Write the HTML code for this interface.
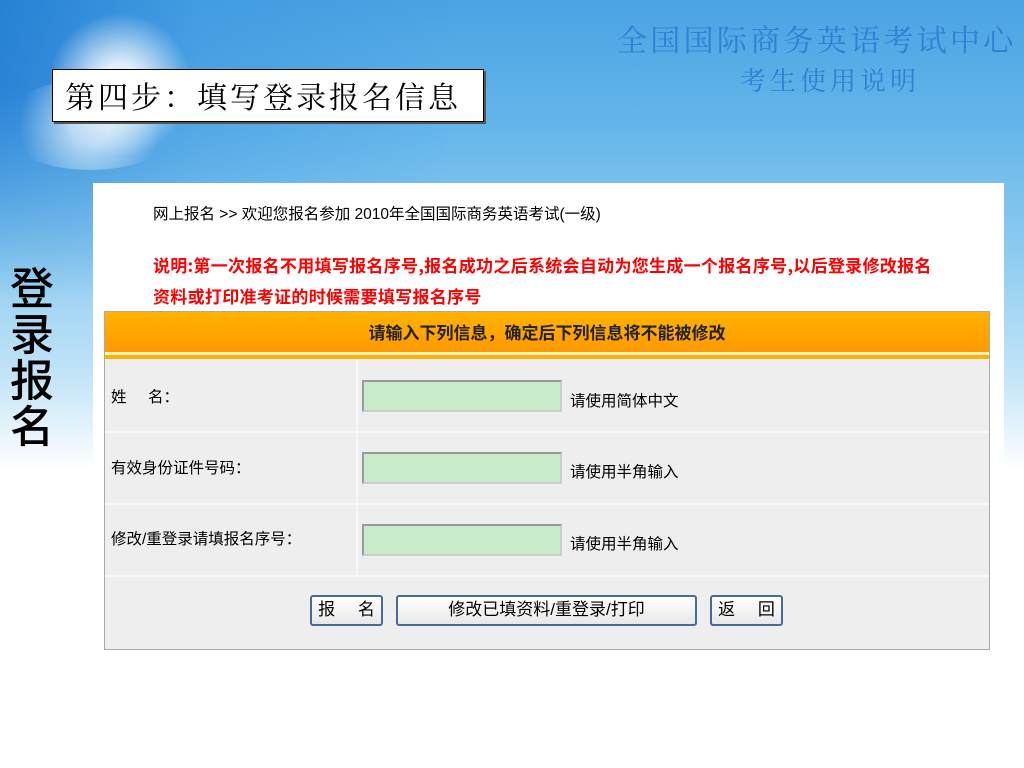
<!DOCTYPE html>
<html><head><meta charset="utf-8"><style>
*{margin:0;padding:0;box-sizing:border-box}
body{width:1024px;height:768px;overflow:hidden;position:relative;font-family:"Liberation Sans","Noto Sans CJK SC",sans-serif;
background:linear-gradient(180deg,#4aa3e2 0px,#62b5ea 120px,#8ccbf0 250px,#c5e5f8 380px,#fff 470px,#fff 768px);}
.a{position:absolute}
</style></head><body>
<div class="a" style="left:0;top:0;width:1024px;height:300px;background:linear-gradient(90deg,rgba(30,120,210,.8) 0,rgba(60,150,225,.5) 200px,rgba(80,170,230,0) 450px);-webkit-mask:linear-gradient(#000 30%,transparent);mask:linear-gradient(#000 30%,transparent)"></div>
<div class="a" style="left:50px;top:10px;width:140px;height:150px;border-radius:50%;background:radial-gradient(circle,rgba(255,255,255,.85) 20%,rgba(255,255,255,0) 70%)"></div>
<div class="a" style="left:0;top:80px;width:180px;height:90px;border-radius:50%;background:radial-gradient(circle,rgba(255,255,255,.6) 20%,rgba(255,255,255,0) 70%)"></div>
<div class="a" style="left:617px;top:16px;font:30px 'Noto Serif CJK SC',serif;color:#2f80d4;letter-spacing:3.3px;white-space:nowrap">全国国际商务英语考试中心</div>
<div class="a" style="left:740px;top:61px;font:26px 'Noto Serif CJK SC',serif;color:#2f80d4;letter-spacing:4px;white-space:nowrap">考生使用说明</div>
<div class="a" style="left:52px;top:69px;width:432px;height:53px;background:#fff;border:1px solid #000;box-shadow:2px 2px 0 #555;font:30px 'Noto Serif CJK SC',serif;line-height:50px;padding-left:12px;letter-spacing:3px;white-space:nowrap">第四步：填写登录报名信息</div>
<div class="a" style="left:10px;top:262px;width:50px;font:500 44px/46px 'Noto Sans CJK SC',sans-serif;color:#000">登录报名</div>
<div class="a" style="left:93px;top:183px;width:911px;height:480px;background:#fff"></div>
<div class="a" style="left:153px;top:202px;font-size:15.5px;color:#000;white-space:nowrap">网上报名 &gt;&gt; 欢迎您报名参加 2010年全国国际商务英语考试(一级)</div>
<div class="a" style="left:153px;top:249px;font:bold 17px/31px 'Noto Sans CJK SC',sans-serif;letter-spacing:.3px;color:#f00;white-space:nowrap">说明:第一次报名不用填写报名序号,报名成功之后系统会自动为您生成一个报名序号,以后登录修改报名<br>资料或打印准考证的时候需要填写报名序号</div>
<div class="a" style="left:104px;top:311px;width:886px;height:339px;border:1px solid #aaa;background:#eee">
 <div style="height:40px;background:linear-gradient(#ffb300,#ff9900);text-align:center;font:bold 17px/40px 'Noto Sans CJK SC',sans-serif;color:#222">请输入下列信息，确定后下列信息将不能被修改</div>
 <div style="height:3px;background:#fff2c0"></div><div style="height:4px;background:#ffb300"></div>
</div>
<div class="a" style="left:105px;top:359px;width:884px;height:290px">
 <div class="a" style="left:251px;top:0;width:2px;height:216px;background:#f8f8f8"></div>
 <div class="a" style="left:0;top:72px;width:884px;height:2px;background:#f8f8f8"></div>
 <div class="a" style="left:0;top:144px;width:884px;height:2px;background:#f8f8f8"></div>
 <div class="a" style="left:0;top:216px;width:884px;height:2px;background:#f8f8f8"></div>
 <div class="a" style="left:6px;top:26px;font-size:15.5px">姓&nbsp;&nbsp;&nbsp;&nbsp;&nbsp;名：</div>
 <div class="a" style="left:6px;top:97px;font-size:15.5px">有效身份证件号码：</div>
 <div class="a" style="left:6px;top:168px;font-size:15.5px">修改/重登录请填报名序号：</div>
 <div class="a" style="left:257px;top:21px;width:200px;height:32px;border:2px solid #aab;border-color:#999 #ccc #ccc #999;background:#c8eccb"></div>
 <div class="a" style="left:257px;top:93px;width:200px;height:32px;border:2px solid #aab;border-color:#999 #ccc #ccc #999;background:#c8eccb"></div>
 <div class="a" style="left:257px;top:165px;width:200px;height:32px;border:2px solid #aab;border-color:#999 #ccc #ccc #999;background:#c8eccb"></div>
 <div class="a" style="left:465px;top:30px;font-size:15.5px">请使用简体中文</div>
 <div class="a" style="left:465px;top:101px;font-size:15.5px">请使用半角输入</div>
 <div class="a" style="left:465px;top:173px;font-size:15.5px">请使用半角输入</div>
</div>
<div class="a" style="left:310px;top:595px;width:73px;height:31px;border:2px solid #4a6a9a;border-radius:3px;background:linear-gradient(#fff,#e8e8e8);font-size:17px;line-height:26px;text-align:center;word-spacing:18px">报 名</div>
<div class="a" style="left:396px;top:595px;width:301px;height:31px;border:2px solid #4a6a9a;border-radius:3px;background:linear-gradient(#fff,#e8e8e8);font-size:17px;line-height:26px;text-align:center">修改已填资料/重登录/打印</div>
<div class="a" style="left:710px;top:595px;width:73px;height:31px;border:2px solid #4a6a9a;border-radius:3px;background:linear-gradient(#fff,#e8e8e8);font-size:17px;line-height:26px;text-align:center;word-spacing:18px">返 回</div>
</body></html>
